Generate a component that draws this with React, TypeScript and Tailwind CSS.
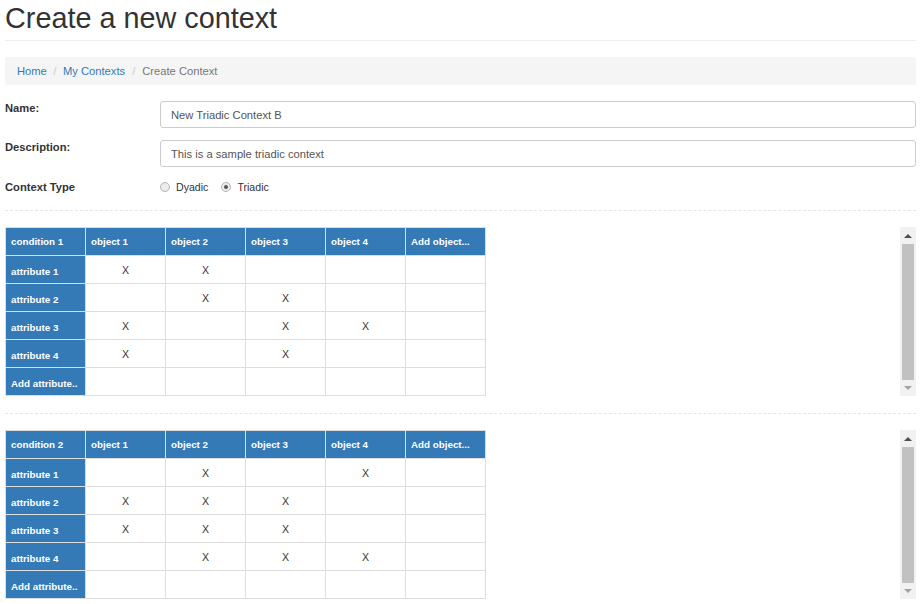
const objects = ["object 1", "object 2", "object 3", "object 4", "Add object..."];

interface Condition {
  name: string;
  rows: { attr: string; marks: boolean[] }[];
}

const conditions: Condition[] = [
  {
    name: "condition 1",
    rows: [
      { attr: "attribute 1", marks: [true, true, false, false, false] },
      { attr: "attribute 2", marks: [false, true, true, false, false] },
      { attr: "attribute 3", marks: [true, false, true, true, false] },
      { attr: "attribute 4", marks: [true, false, true, false, false] },
      { attr: "Add attribute..", marks: [false, false, false, false, false] },
    ],
  },
  {
    name: "condition 2",
    rows: [
      { attr: "attribute 1", marks: [false, true, false, true, false] },
      { attr: "attribute 2", marks: [true, true, true, false, false] },
      { attr: "attribute 3", marks: [true, true, true, false, false] },
      { attr: "attribute 4", marks: [false, true, true, true, false] },
      { attr: "Add attribute..", marks: [false, false, false, false, false] },
    ],
  },
];

function Scrollbar() {
  return (
    <div className="flex w-[16px] flex-col bg-[#f1f1f1]">
      <div className="flex h-[17px] items-center justify-center">
        <div className="h-0 w-0 border-x-[4px] border-b-[4px] border-x-transparent border-b-[#505050]" />
      </div>
      <div className="mx-[2px] flex-1 bg-[#c1c1c1]" />
      <div className="flex h-[16px] items-center justify-center">
        <div className="h-0 w-0 border-x-[4px] border-t-[4px] border-x-transparent border-t-[#a3a3a3]" />
      </div>
    </div>
  );
}

function ContextTable({ condition }: { condition: Condition }) {
  const head =
    "h-[28px] w-[80px] border border-[#ddd] bg-[#337ab7] px-[5px] text-left text-[9.8px] font-bold text-white";
  return (
    <div className="flex">
      <div className="flex-1">
        <table className="border-collapse">
          <thead>
            <tr>
              <th className={head}>{condition.name}</th>
              {objects.map((o) => (
                <th className={head} key={o}>
                  {o}
                </th>
              ))}
            </tr>
          </thead>
          <tbody>
            {condition.rows.map((row) => (
              <tr key={row.attr}>
                <th className={`${head} pt-[4px]`}>{row.attr}</th>
                {row.marks.map((m, i) => (
                  <td
                    className="h-[28px] w-[80px] border border-[#ddd] text-center text-[10.6px] text-[#333]"
                    key={i}
                  >
                    {m ? "X" : ""}
                  </td>
                ))}
              </tr>
            ))}
          </tbody>
        </table>
      </div>
      <Scrollbar />
    </div>
  );
}

function Radio({ checked, label }: { checked?: boolean; label: string }) {
  return (
    <label className="flex items-center gap-[6px]">
      <span className="flex h-[10px] w-[10px] items-center justify-center rounded-full border border-[#b5b5b5] bg-[#ececec]">
        {checked && <span className="h-[4px] w-[4px] rounded-full bg-[#555]" />}
      </span>
      <span>{label}</span>
    </label>
  );
}

function DashedRule({ className }: { className: string }) {
  return <div className={`border-t border-dashed border-[#e6e6e6] ${className}`} />;
}

export default function App() {
  return (
    <div className="bg-white px-[5px] pb-[5px] font-['Liberation_Sans',Arial,sans-serif] text-[11.2px] leading-[16px] text-[#333]">
      <div className="border-b border-[#eee] pt-[2px] pb-[6px]">
        <h1 className="text-[28.8px] leading-[32px]">Create a new context</h1>
      </div>

      <ol className="mt-[16px] flex h-[28px] items-center rounded-[3px] bg-[#f5f5f5] px-[12px]">
        <li className="text-[#337ab7]">Home</li>
        <li className="px-[6.5px] text-[#ccc]">/</li>
        <li className="text-[#337ab7]">My Contexts</li>
        <li className="px-[7px] text-[#ccc]">/</li>
        <li className="text-[#777]">Create Context</li>
      </ol>

      <div className="mt-[15px] flex items-start">
        <label className="w-[155px] font-bold">Name:</label>
        <input
          className="mt-[1px] h-[27px] flex-1 rounded-[3px] border border-[#ccc] px-[10px] text-[11.2px] text-[#555]"
          defaultValue="New Triadic Context B"
        />
      </div>
      <div className="mt-[11px] flex items-start">
        <label className="w-[155px] font-bold">Description:</label>
        <input
          className="mt-[1px] h-[27px] flex-1 rounded-[3px] border border-[#ccc] px-[10px] text-[11.2px] text-[#555]"
          defaultValue="This is a sample triadic context"
        />
      </div>
      <div className="mt-[12px] flex items-center">
        <span className="w-[155px] font-bold">Context Type</span>
        <div className="flex items-center gap-[13px] text-[10.6px]">
          <Radio label="Dyadic" />
          <Radio checked label="Triadic" />
        </div>
      </div>

      <DashedRule className="mt-[15px] mb-[16px]" />
      <ContextTable condition={conditions[0]} />
      <DashedRule className="mt-[17px] mb-[16px]" />
      <ContextTable condition={conditions[1]} />
    </div>
  );
}
